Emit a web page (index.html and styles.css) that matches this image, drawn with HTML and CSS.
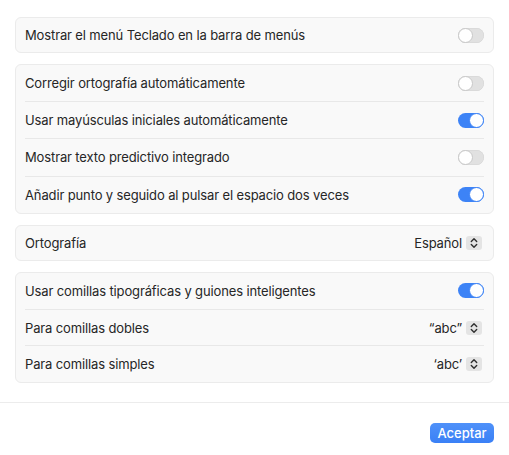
FILE: index.html
```html
<!DOCTYPE html>
<html lang="es">
<head>
<meta charset="utf-8">
<title>Teclado</title>
<link rel="stylesheet" href="styles.css">
</head>
<body>
<div class="sheet">
  <div class="groups">
    <div class="card">
      <div class="row single"><span class="label">Mostrar el menú Teclado en la barra de menús</span><span class="toggle"></span></div>
    </div>
    <div class="card">
      <div class="row"><span class="label">Corregir ortografía automáticamente</span><span class="toggle"></span></div>
      <div class="row"><span class="label">Usar mayúsculas iniciales automáticamente</span><span class="toggle on"></span></div>
      <div class="row"><span class="label">Mostrar texto predictivo integrado</span><span class="toggle"></span></div>
      <div class="row"><span class="label">Añadir punto y seguido al pulsar el espacio dos veces</span><span class="toggle on"></span></div>
    </div>
    <div class="card">
      <div class="row single"><span class="label">Ortografía</span>
        <span class="popup"><span class="value">Español</span><span class="stepper"><svg width="16" height="14" viewBox="0 0 16 14"><path d="M5.3 5.4 L8 2.7 L10.7 5.4 M5.3 8.6 L8 11.3 L10.7 8.6" fill="none" stroke="#2e2e2e" stroke-width="1.4" stroke-linecap="round" stroke-linejoin="round"/></svg></span></span>
      </div>
    </div>
    <div class="card">
      <div class="row"><span class="label">Usar comillas tipográficas y guiones inteligentes</span><span class="toggle on"></span></div>
      <div class="row short"><span class="label">Para comillas dobles</span>
        <span class="popup"><span class="value">“abc”</span><span class="stepper"><svg width="16" height="14" viewBox="0 0 16 14"><path d="M5.3 5.4 L8 2.7 L10.7 5.4 M5.3 8.6 L8 11.3 L10.7 8.6" fill="none" stroke="#2e2e2e" stroke-width="1.4" stroke-linecap="round" stroke-linejoin="round"/></svg></span></span>
      </div>
      <div class="row short"><span class="label">Para comillas simples</span>
        <span class="popup"><span class="value">‘abc’</span><span class="stepper"><svg width="16" height="14" viewBox="0 0 16 14"><path d="M5.3 5.4 L8 2.7 L10.7 5.4 M5.3 8.6 L8 11.3 L10.7 8.6" fill="none" stroke="#2e2e2e" stroke-width="1.4" stroke-linecap="round" stroke-linejoin="round"/></svg></span></span>
      </div>
    </div>
  </div>
  <div class="footer">
    <button class="primary">Aceptar</button>
  </div>
</div>
</body>
</html>
```
FILE: styles.css
```css
html, body {
  margin: 0;
  padding: 0;
  background: #ffffff;
}
body {
  font-family: Inter, "Liberation Sans", sans-serif;
  font-size: 13px;
  letter-spacing: -0.13px;
  color: #262626;
  width: 509px;
  height: 455px;
  overflow: hidden;
}
.sheet {
  display: flex;
  flex-direction: column;
}
.groups {
  display: flex;
  flex-direction: column;
  gap: 11px;
  padding: 17px 15px 19px 15px;
}
.card {
  background: #f9f9f9;
  border: 1px solid #ebebeb;
  border-radius: 6px;
  display: flex;
  flex-direction: column;
  padding: 0 9px;
}
.row {
  height: 36.2px;
  display: flex;
  align-items: center;
  justify-content: space-between;
  border-top: 1px solid #e8e8e8;
}
.row:first-child {
  border-top: none;
}
.row.single {
  height: 34px;
}
.row.short {
  height: 35.3px;
}
.label {
  white-space: nowrap;
}
.toggle {
  width: 26px;
  height: 15px;
  border-radius: 8px;
  background: #e1e1e1;
  box-shadow: inset 0 0 0 0.5px #d4d4d4;
  position: relative;
  flex: none;
}
.toggle::after {
  content: "";
  position: absolute;
  top: 0;
  left: 0;
  width: 13px;
  height: 13px;
  border-radius: 50%;
  background: #ffffff;
  border: 1px solid #c8c8c8;
}
.toggle.on {
  background: #3d83f6;
  box-shadow: none;
}
.toggle.on::after {
  left: auto;
  right: 0;
  border-color: #3d83f6;
}
.popup {
  display: flex;
  align-items: center;
  gap: 4px;
  margin-right: 2px;
}
.stepper {
  width: 16px;
  height: 14px;
  border-radius: 3px;
  background: #e4e4e4;
  display: flex;
}
.footer {
  border-top: 1px solid #ececec;
  display: flex;
  justify-content: flex-end;
  padding: 20px 15px 0 15px;
}
.primary {
  width: 64px;
  height: 20px;
  border: none;
  border-radius: 5px;
  background: linear-gradient(#4f91f9, #3a80f6);
  color: #ffffff;
  font-family: Inter, "Liberation Sans", sans-serif;
  font-size: 13px;
  font-weight: 500;
  letter-spacing: 0;
  padding: 0;
}
```
